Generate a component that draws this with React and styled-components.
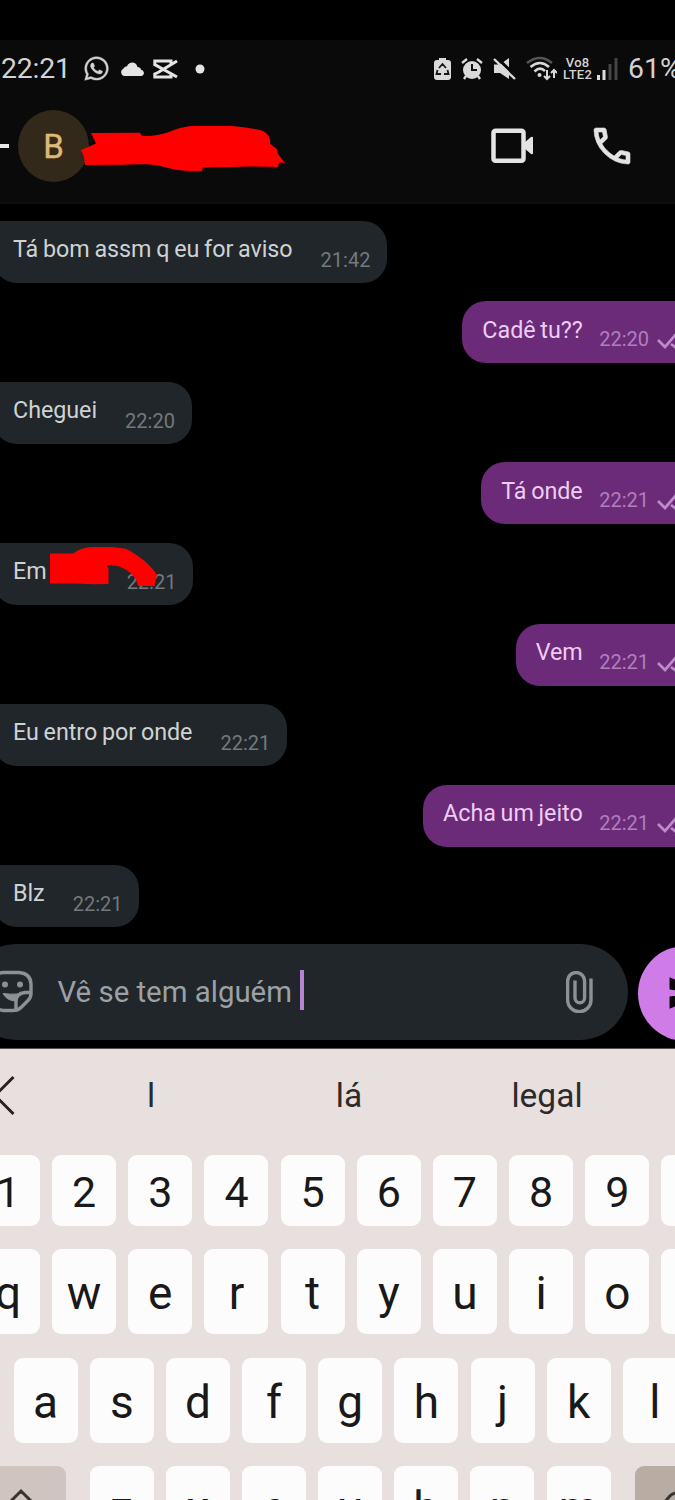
import React from "react";
import styled, { createGlobalStyle } from "styled-components";
import { FaWhatsapp } from "react-icons/fa";

const Global = createGlobalStyle`
  * { box-sizing: border-box; }
  html, body { margin: 0; background: #000; }
  body { overflow: hidden; font-family: Roboto, "Liberation Sans", sans-serif; }
  svg { display: block; flex: none; }
`;

const Phone = styled.main`
  width: 675px;
  height: 1500px;
  overflow: hidden;
  background: #000;
  padding-top: 40px;
  display: flex;
  flex-direction: column;
`;

const Top = styled.header`
  height: 164px;
  flex: none;
  background: #0a0a0a;
  border-bottom: 2px solid #0e0f10;
  color: #dcdcdc;
`;

const StatusBar = styled.div`
  height: 57px;
  display: flex;
  align-items: center;
  color: #d2d2d2;
`;

const Clock = styled.span`
  width: 82px;
  margin-left: 1px;
  flex: none;
  font-size: 28.4px;
  letter-spacing: -0.2px;
`;

const StatusIcons = styled.div`
  display: flex;
  align-items: center;
  gap: ${(p) => p.$gap || 0}px;
  margin-left: ${(p) => p.$start || 0}px;
`;

const Network = styled.span`
  display: flex;
  flex-direction: column;
  align-items: center;
  width: 31px;
  flex: none;
  margin-left: 5px;
  font-size: 13px;
  line-height: 12px;
  letter-spacing: 0.2px;
  font-weight: 500;
`;

const Battery = styled.span`
  margin-left: 10px;
  font-size: 28.4px;
  white-space: nowrap;
`;

const ContactBar = styled.div`
  position: relative;
  height: 98px;
  display: flex;
  align-items: center;
`;

const BackStub = styled.span`
  width: 9px;
  height: 4px;
  margin-right: 9px;
  background: #e8e8e8;
`;

const Avatar = styled.span`
  width: 71px;
  height: 72px;
  border-radius: 50%;
  background: #33291b;
  color: #dcba7c;
  font-size: 33px;
  -webkit-text-stroke: 0.4px #dcba7c;
  text-shadow: 0 0 3px #5a3000;
  display: grid;
  place-items: center;
`;

const Calls = styled.div`
  display: flex;
  align-items: center;
  gap: 54px;
  margin-left: 402px;
`;

const Scribble = styled.svg`
  position: absolute;
  left: ${(p) => p.$x}px;
  top: ${(p) => p.$y}px;
  fill: #fe0000;
`;

const Messages = styled.section`
  height: 739.5px;
  flex: none;
  padding-top: 16.8px;
  display: flex;
  flex-direction: column;
  gap: 18.55px;
`;

const Bubble = styled.article`
  position: relative;
  flex: none;
  height: 62px;
  display: flex;
  align-items: flex-start;
  white-space: nowrap;
  align-self: ${(p) => (p.$out ? "flex-end" : "flex-start")};
  gap: ${(p) => (p.$out ? 16.5 : 28)}px;
  margin: ${(p) => (p.$out ? "0 -32px 0 0" : "0 0 0 -7px")};
  padding: ${(p) => (p.$out ? "0 18px 0 20px" : "0 17px 0 20px")};
  border-radius: ${(p) => (p.$out ? "24px 6px 6px 24px" : "6px 24px 24px 24px")};
  background: ${(p) => (p.$out ? "#6b2b79" : "#20262a")};
  color: ${(p) => (p.$out ? "#edcdf2" : "#cfd2d3")};
`;

const Words = styled.span`
  margin-top: ${(p) => (p.$out ? 14.4 : 14.3)}px;
  font-size: 23.3px;
  word-spacing: -1px;
  letter-spacing: -0.03px;
  line-height: 28px;
`;

const Time = styled.time`
  margin-top: ${(p) => (p.$out ? 26 : 27.3)}px;
  margin-left: ${(p) => p.$shift || 0}px;
  font-size: 20px;
  line-height: 24px;
  color: ${(p) => (p.$out ? "#b07fbc" : "#74797d")};
`;

const Ticks = styled.svg`
  margin: 29px 0 0 -8.500px;
`;

const Composer = styled.section`
  height: 105.5px;
  flex: none;
  display: flex;
  align-items: flex-start;
  gap: 10px;
  border-bottom: 1px solid #55504e;
`;

const Field = styled.div`
  width: 660px;
  height: 96.5px;
  flex: none;
  margin-left: -32px;
  padding: 0 34px 0 24px;
  border-radius: 48px;
  background: #20262a;
  color: #9ba1a5;
  display: flex;
  align-items: center;
`;

const Draft = styled.span`
  margin-left: 22.5px;
  font-size: 29.4px;
  white-space: nowrap;
`;

const Caret = styled.span`
  width: 4px;
  height: 40px;
  margin: -3px auto 0 8px;
  background: #b583cf;
`;

const Send = styled.div`
  width: 95px;
  height: 95px;
  flex: none;
  margin-top: 2px;
  border-radius: 50%;
  background: #cf7ce8;
  display: flex;
  align-items: center;
  padding-left: 27.5px;
`;

const Keyboard = styled.section`
  flex: 1;
  background: #e8e0de;
  color: #191919;
`;

const Suggestions = styled.div`
  height: 106px;
  display: flex;
`;

const BackCell = styled.span`
  width: 52px;
  padding-top: 26px;
`;

const Suggestion = styled.span`
  width: 198px;
  padding-top: 28px;
  text-align: center;
  font-size: 33.5px;
  line-height: 38px;
  color: #2c2a2a;
`;

const Row = styled.div`
  display: flex;
  gap: 12.16px;
  margin: 0 0 ${(p) => p.$below || 0}px ${(p) => p.$start}px;
`;

const Key = styled.span`
  width: ${(p) => p.$w || 64}px;
  height: ${(p) => (p.$digit ? 70.5 : 85)}px;
  flex: none;
  border-radius: 9px;
  background: ${(p) => p.$bg || "#fdfcfc"};
  font-size: ${(p) => (p.$digit ? 43 : 46)}px;
  line-height: ${(p) => (p.$digit ? 75 : p.$low ? 85 : 88)}px;
  text-align: center;
  margin-left: ${(p) => (p.$space || 0)}px;
`;

const messages = [
  { text: "Tá bom assm q eu for aviso", time: "21:42" },
  { text: "Cadê tu??", time: "22:20", out: true },
  { text: "Cheguei", time: "22:20" },
  { text: "Tá onde", time: "22:21", out: true },
  { text: "Em", time: "22:21", covered: true },
  { text: "Vem", time: "22:21", out: true },
  { text: "Eu entro por onde", time: "22:21" },
  { text: "Acha um jeito", time: "22:21", out: true },
  { text: "Blz", time: "22:21" },
];

function Message({ text, time, out, covered }) {
  return (
    <Bubble $out={out}>
      <Words $out={out}>{text}</Words>
      <Time $out={out} $shift={covered ? 52 : 0}>{time}</Time>
      {out && (
        <Ticks width="32" height="20" viewBox="0 0 32 20" fill="none" stroke="#bd8bc9" strokeWidth="2.8">
          <path d="M1 10l7 7L21 2M14 14l4 3L31 2" />
        </Ticks>
      )}
      {covered && (
        <Scribble $x={57} $y={3} width="108" height="41" viewBox="50 546 108 41">
          <path d="M50 553.5H73C80 548 88 547 95 547h17l14 1.700C140 556 152 566 157 575l-2 8v3h-17c-1-8-7-15-20-20l-11-1 1.500 4V584l-15 .3-18-.8H50z" />
        </Scribble>
      )}
    </Bubble>
  );
}

const StatusLeft = () => (
  <StatusIcons $gap={9.5}>
    <FaWhatsapp size={27} stroke="#d2d2d2" strokeWidth={8} />
    <svg width="24" height="14" viewBox="0 0 24 14" fill="#e4e4e4">
      <path d="M4 14a4 4 0 0 1-.5-7.500C4.500 4.500 6 4.500 7 4.200 9-.5 16-1 17.500 5c2 0 3.200 1 3.500 2.800 4 .7 3.800 6.200 0 6.200z" />
    </svg>
    <svg width="25" height="20" viewBox="0 0 25 20" fill="none" stroke="#e4e4e4" strokeWidth="3">
      <path d="M24 2L5 13.500M18 5V2H1.800v3.500L24 18M5 13.500l-3.200 1.500V18H18v-3.500" />
    </svg>
    <svg width="24" height="10" viewBox="0 0 24 10" fill="#e4e4e4">
      <circle cx="12" cy="5" r="4.500" />
    </svg>
  </StatusIcons>
);

const StatusRight = () => (
  <>
    <StatusIcons $gap={10.2} $start={222}>
      <svg width="17" height="24" viewBox="0 0 17 24">
        <path fill="#dadada" d="M5 1h7v2h2q3 0 3 3v14q0 3-3 3H3q-3 0-3-3V6q0-3 3-3h2z" />
        <path fill="none" stroke="#161616" strokeWidth="1.800" d="M5 11l3.500-4 3.500 4M3.500 13l-1 4h4.500M13.500 13l1 4H10" />
      </svg>
      <svg width="22" height="24" viewBox="0 0 22 24">
        <circle cx="11" cy="13" r="9" fill="#dadada" />
        <path d="M1 6l5-4M16 2l5 4M5 19l-2 3M17 19l2 3" stroke="#dadada" strokeWidth="2.400" />
        <path d="M11 7v6h5" fill="none" stroke="#111" strokeWidth="2" />
      </svg>
      <svg width="23" height="24" viewBox="0 0 23 24">
        <path fill="#dadada" d="M1 7.500h6L16 1v21l-9-6H1z" />
        <path d="M3 0l22 21" stroke="#0a0a0a" strokeWidth="3" />
        <path d="M1 2l21 20" stroke="#dadada" strokeWidth="2.400" />
      </svg>
      <svg width="31" height="25" viewBox="0 0 31 25" fill="none" strokeWidth="2.500">
        <path d="M1 7Q14-3 26 7" stroke="#555" />
        <path d="M4.500 11Q14 3 23 11M8.500 15.500Q14 10 19 15" stroke="#d8d8d8" />
        <circle cx="13.500" cy="19" r="2" fill="#d8d8d8" />
        <path d="M21 14v9M18 20l3 3 3-3M28 22v-8M25 17l3-3 3 3" stroke="#d8d8d8" strokeWidth="2" />
      </svg>
    </StatusIcons>
    <Network>
      <span>Vo8</span>
      <span>LTE2</span>
    </Network>
    <StatusIcons $start={4}>
      <svg width="21" height="22" viewBox="0 0 21 22">
        <path d="M0 17h3v5H0zM5.500 12h3v10h-3z" fill="#dcdcdc" />
        <path d="M11.500 6h3v16h-3zM17.500 0h3v22h-3z" fill="#454545" />
      </svg>
    </StatusIcons>
    <Battery>61%</Battery>
  </>
);

const letters = (row, low) => row.split("").map((c) => <Key key={c} $low={low}>{c}</Key>);

export default function App() {
  return (
    <Phone>
      <Global />
      <Top>
        <StatusBar>
          <Clock>22:21</Clock>
          <StatusLeft />
          <StatusRight />
        </StatusBar>
        <ContactBar>
          <BackStub />
          <Avatar>B</Avatar>
          <Scribble $x={80} $y={28} width="206" height="48" viewBox="80 125 206 48">
            <path d="M91 133l49-.3 2 3.300c14 0 22-2 32-6 9-3 14-4 20-4h38c13 1 22 3 28 4 7 2 11 7 10 14l7 5 1 5 7 9-6-.5-1 4.500-27-.5-48 1-1 3.500H190c-14 0-24-4-32-5.500-11-2-25-1-34-.7l-39 .2-1-8-3-7 15-6.500z" />
          </Scribble>
          <Calls>
            <svg width="43" height="36" viewBox="0 0 43 36">
              <rect x="2.500" y="2.800" width="30" height="30" rx="2" fill="none" stroke="#e4e4e4" strokeWidth="4.500" />
              <path d="M33 15l7-6q2-1 2 1v15q0 2-2 1l-7-6z" fill="#e4e4e4" />
            </svg>
            <svg width="48" height="48" viewBox="0 -960 960 960" fill="#e4e4e4" stroke="#e4e4e4" strokeWidth="12">
              <path d="M798-120q-125 0-247-54.500T329-329Q229-429 174.500-551T120-798q0-18 12-30t30-12h162q14 0 25 9.500t13 22.500l26 140q2 16-1 27t-11 19l-97 98q20 37 47.500 71.500T387-386q31 31 65 57.500t72 48.500l94-94q9-9 23.500-13.500T670-390l138 28q14 4 23 14.500t9 23.500v162q0 18-12 30t-30 12ZM241-600l66-66-17-94h-89q5 41 14 81t26 79Zm358 358q39 17 79.500 27t81.500 13v-88l-94-19-67 67Z" />
            </svg>
          </Calls>
        </ContactBar>
      </Top>

      <Messages>
        {messages.map((m, i) => <Message key={i} {...m} />)}
      </Messages>

      <Composer>
        <Field>
          <svg width="43" height="43" viewBox="-8 971 43 43" fill="none" stroke="#8b9195" strokeWidth="3.400">
            <path d="M3 973.500h16q12 1 12 12v9q0 4-3 7l-7 7q-3 3-8 3H3q-7-1-10-7v-21q2-10 10-10z" />
            <path d="M31 993.500h-6q-9 1-9 9v8.500" />
            <path d="M3 994.500q7 1 16 .5l-3 7q-9 0-13-7.500z" fill="#8b9195" strokeWidth="1" />
            <circle cx="5" cy="985.500" r="3" fill="#8b9195" stroke="none" />
            <circle cx="20" cy="985.500" r="3" fill="#8b9195" stroke="none" />
          </svg>
          <Draft>Vê se tem alguém</Draft>
          <Caret />
          <svg width="28" height="42" viewBox="566 971 28 42" fill="none" stroke="#8b9195" strokeWidth="3.400">
            <path d="M591 978.500V1000a11.700 11.700 0 0 1-23.400 0V981a8.500 8.500 0 0 1 17 0v17a4.800 4.800 0 0 1-9.600 0V980.500" />
          </svg>
        </Field>
        <Send>
          <svg width="42" height="42" viewBox="0 0 24 24" fill="#0b060c">
            <path d="M2 21l21-9L2 3v7l15 2-15 2z" />
          </svg>
        </Send>
      </Composer>

      <Keyboard>
        <Suggestions>
          <BackCell>
            <svg width="16" height="42" viewBox="0 0 16 42" fill="none" stroke="#242222" strokeWidth="3">
              <path d="M13.500 2L-5 20.500l18.500 18.500" />
            </svg>
          </BackCell>
          <Suggestion>l</Suggestion>
          <Suggestion>lá</Suggestion>
          <Suggestion>legal</Suggestion>
        </Suggestions>
        <Row $start={-24} $below={23.5}>
          {"1234567890".split("").map((c) => <Key key={c} $digit>{c}</Key>)}
        </Row>
        <Row $start={-24} $below={24}>{letters("qwertyuiop")}</Row>
        <Row $start={13.6} $below={23}>{letters("asdfghjkl")}</Row>
        <Row $start={-24}>
          <Key $w={90} $bg="#cfc4bf">
            <svg width="90" height="85" viewBox="-24 1466 90 85" fill="none" stroke="#3a3431" strokeWidth="3">
              <path d="M2 1510l19-19 19 19h-10v16H12v-16z" />
            </svg>
          </Key>
          <Key $space={11.5} $low>z</Key>
          {letters("xcvbnm", true)}
          <Key $w={90} $space={12} $bg="#b9aca2">
            <svg width="90" height="85" viewBox="636 1466 90 85" fill="none" stroke="#3a3431" strokeWidth="3">
              <path d="M700 1493h-22q-5 0-8 4l-11 13 11 13q3 4 8 4h22z" />
            </svg>
          </Key>
        </Row>
      </Keyboard>
    </Phone>
  );
}
